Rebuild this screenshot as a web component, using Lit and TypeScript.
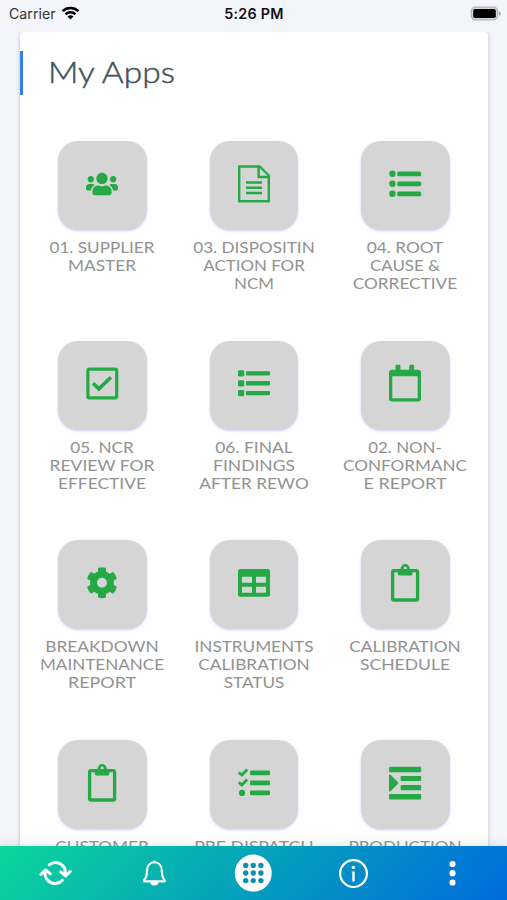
import { LitElement, html, svg, css } from "lit";
import { customElement, property } from "lit/decorators.js";

type Line = [text: string, width: number];
interface AppItem {
  icon: string;
  lines: Line[];
}

const clipboard = svg`
  <rect x="7.6" y="7.6" width="25" height="29.4" rx="1.6" fill="none" stroke="currentColor" stroke-width="3.3"/>
  <path fill-rule="evenodd" d="M12.800 6H15.600a4.600 4.900 0 0 1 9.200 0h2.600v5a1.400 1.400 0 0 1-1.400 1.400H14.200a1.400 1.400 0 0 1-1.400-1.400zM20.200 3.600a1.600 1.600 0 1 0 0.010 0z"/>`;

const ICONS: Record<string, unknown> = {
  users: svg`<g transform="translate(4 7.200) scale(.05)"><path d="M96 224c35.300 0 64-28.700 64-64s-28.700-64-64-64-64 28.700-64 64 28.700 64 64 64zm448 0c35.300 0 64-28.700 64-64s-28.700-64-64-64-64 28.700-64 64 28.700 64 64 64zm32 32h-64c-17.600 0-33.500 7.100-45.100 18.600 40.300 22.100 68.900 62 75.100 109.400h66c17.700 0 32-14.300 32-32v-32c0-35.300-28.700-64-64-64zm-256 0c61.900 0 112-50.100 112-112S381.900 32 320 32 208 82.100 208 144s50.100 112 112 112zm76.800 32h-8.300c-20.800 10-43.900 16-68.500 16s-47.600-6-68.500-16h-8.300C179.600 288 128 339.600 128 403.200V432c0 26.500 21.500 48 48 48h288c26.500 0 48-21.500 48-48v-28.800c0-63.600-51.600-115.200-115.200-115.200zm-223.700-13.400C161.500 263.100 145.600 256 128 256H64c-35.300 0-64 28.700-64 64v32c0 17.700 14.300 32 32 32h65.900c6.300-47.400 34.900-87.300 75.200-109.400z"/></g>`,
  file: svg`<g fill="none" stroke="currentColor" stroke-width="2.400" stroke-linejoin="round">
    <path d="M5.200 2.500H25.800L34.800 11.500V37.300H5.200z"/><path d="M24.600 2.500V13H34.800"/>
    <path d="M12 18.500H28M12 23.800H28M12 29H28"/></g>`,
  listDots: svg`<circle cx="7.400" cy="9.800" r="3.200"/><circle cx="7.400" cy="19.800" r="3.200"/><circle cx="7.400" cy="29.800" r="3.200"/>
    <rect x="12.200" y="7.400" width="24" height="4.800" rx="1.500"/><rect x="12.200" y="17.400" width="24" height="4.800" rx="1.500"/><rect x="12.200" y="27.400" width="24" height="4.800" rx="1.500"/>`,
  checkBox: svg`<rect x="5.900" y="6.100" width="28.800" height="28.800" rx="1.600" fill="none" stroke="currentColor" stroke-width="3.200"/>
    <path d="M11 20.200L16.900 25.900L28.900 14.200" fill="none" stroke="currentColor" stroke-width="3.600"/>`,
  listSquares: svg`<rect x="4" y="7.300" width="6.200" height="6.200" rx="1.200"/><rect x="4" y="17.200" width="6.200" height="6.200" rx="1.200"/><rect x="4" y="27.100" width="6.200" height="6.200" rx="1.200"/>
    <rect x="12" y="8.200" width="24" height="4.300" rx="1"/><rect x="12" y="18.100" width="24" height="4.300" rx="1"/><rect x="12" y="28" width="24" height="4.300" rx="1"/>`,
  calendar: svg`<path fill-rule="evenodd" d="M10.600 2.800a1 1 0 0 1 1-1h2.800a1 1 0 0 1 1 1V6.700h8.900V2.800a1 1 0 0 1 1-1h2.800a1 1 0 0 1 1 1V6.700H33a3 3 0 0 1 3 3V35.500a3 3 0 0 1-3 3H7a3 3 0 0 1-3-3V9.700a3 3 0 0 1 3-3h3.600zM7.300 13.300V34.700a.6.6 0 0 0 .6.6H32.100a.6.6 0 0 0 .6-.6V13.300z"/>`,
  gear: svg`<g transform="translate(4.130 3.930) scale(.062)"><path d="M487.400 315.700l-42.600-24.600c4.300-23.200 4.300-47 0-70.200l42.600-24.600c4.900-2.800 7.100-8.600 5.500-14-11.100-35.600-30-67.800-54.700-94.600-3.800-4.100-10-5.100-14.800-2.300L380.800 110c-17.900-15.400-38.500-27.300-60.800-35.100V25.800c0-5.600-3.900-10.500-9.400-11.700-36.700-8.200-74.300-7.800-109.200 0-5.500 1.200-9.400 6.100-9.400 11.700V75c-22.200 7.900-42.800 19.800-60.800 35.100L88.700 85.500c-4.900-2.800-11-1.900-14.800 2.300-24.700 26.700-43.600 58.900-54.700 94.600-1.700 5.400.6 11.200 5.500 14L67.300 221c-4.300 23.200-4.300 47 0 70.200l-42.600 24.600c-4.900 2.800-7.100 8.600-5.500 14 11.100 35.600 30 67.800 54.700 94.600 3.800 4.100 10 5.100 14.800 2.300l42.600-24.600c17.900 15.400 38.500 27.300 60.800 35.100v49.200c0 5.600 3.900 10.500 9.400 11.700 36.700 8.200 74.300 7.800 109.200 0 5.500-1.200 9.400-6.100 9.400-11.700v-49.200c22.200-7.900 42.800-19.800 60.800-35.100l42.600 24.600c4.900 2.800 11 1.900 14.800-2.300 24.700-26.700 43.600-58.900 54.700-94.600 1.500-5.500-.7-11.300-5.600-14.100zM256 336c-44.100 0-80-35.900-80-80s35.900-80 80-80 80 35.900 80 80-35.900 80-80 80z"/></g>`,
  table: svg`<path fill-rule="evenodd" d="M6.500 6H33.500a2.500 2.500 0 0 1 2.500 2.500V31.200a2.500 2.500 0 0 1-2.500 2.500H6.500a2.500 2.500 0 0 1-2.500-2.500V8.500a2.500 2.500 0 0 1 2.500-2.500zM8 13.800V19.700H18V13.800zM22 13.800V19.700H32V13.800zM8 23.700V29.700H18V23.700zM22 23.700V29.700H32V23.700z"/>`,
  clipboard,
  tasks: svg`<g fill="none" stroke="currentColor" stroke-width="2.900"><path d="M4.800 9.400L7.900 12L13.200 6.500"/><path d="M4.800 19.400L7.900 22L13.200 16.500"/></g>
    <circle cx="8" cy="29.900" r="3.100"/>
    <rect x="16" y="7.600" width="20" height="4.700" rx="1"/><rect x="16" y="17.500" width="20" height="4.700" rx="1"/><rect x="16" y="27.500" width="20" height="4.700" rx="1"/>`,
  indent: svg`<rect x="4" y="3.800" width="32.200" height="5.400" rx="1.100"/><rect x="15.600" y="12.900" width="20.600" height="5.200" rx="1.100"/>
    <rect x="15.600" y="22.100" width="20.600" height="5.200" rx="1.100"/><rect x="4" y="31.100" width="32.200" height="5.400" rx="1.100"/>
    <path d="M4 12.500c0-.9 1-1.300 1.600-.7L13 19.300c.4.400.4 1 0 1.400L5.600 28.300C5 28.900 4 28.500 4 27.600z"/>`,
};

const APPS: AppItem[] = [
  { icon: "users", lines: [["01. SUPPLIER", 105], ["MASTER", 68]] },
  { icon: "file", lines: [["03. DISPOSITIN", 121.5], ["ACTION FOR", 101.5], ["NCM", 40]] },
  { icon: "listDots", lines: [["04. ROOT", 76.5], ["CAUSE &", 70], ["CORRECTIVE", 104.5]] },
  { icon: "checkBox", lines: [["05. NCR", 63.5], ["REVIEW FOR", 105], ["EFFECTIVE", 88]] },
  { icon: "listSquares", lines: [["06. FINAL", 77.5], ["FINDINGS", 82], ["AFTER REWO", 109.5]] },
  { icon: "calendar", lines: [["02. NON-", 73.5], ["CONFORMANC", 124], ["E REPORT", 83]] },
  { icon: "gear", lines: [["BREAKDOWN", 113.5], ["MAINTENANCE", 124], ["REPORT", 68]] },
  { icon: "table", lines: [["INSTRUMENTS", 119], ["CALIBRATION", 111.5], ["STATUS", 60.5]] },
  { icon: "clipboard", lines: [["CALIBRATION", 111.5], ["SCHEDULE", 90]] },
  { icon: "clipboard", lines: [["CUSTOMER", 93.5]] },
  { icon: "tasks", lines: [["PRE DISPATCH", 119.5]] },
  { icon: "indent", lines: [["PRODUCTION", 113]] },
];

@customElement("app-tile")
class AppTile extends LitElement {
  @property({ attribute: false }) item!: AppItem;

  static styles = css`
    :host { display: flex; flex-direction: column; align-items: center; }
    .tile {
      width: 88.5px; height: 89px; border-radius: 20px; background: #d5d5d5;
      box-shadow: 0 1px 2.5px rgba(150, 130, 255, .42);
      display: flex; align-items: center; justify-content: center;
    }
    .icon { width: 40px; height: 40px; margin-bottom: 3.6px; fill: currentColor; color: #24a944; }
    .label { display: block; width: 150px; height: 62px; margin-top: 5px; overflow: visible; }
    .line { font: 400 16px Lato, "Open Sans", sans-serif; fill: #929292; text-anchor: middle; }
  `;

  render() {
    return html`
      <div class="tile"><svg class="icon" viewBox="0 0 40 40">${ICONS[this.item.icon]}</svg></div>
      <svg class="label" viewBox="0 0 150 62">
        ${this.item.lines.map(([text, w], i) => svg`<text class="line" x="75" y=${18 + i * 18.2} textLength=${w} lengthAdjust="spacingAndGlyphs">${text}</text>`)}
      </svg>`;
  }
}

@customElement("app-root")
class AppRoot extends LitElement {
  static styles = css`
    :host {
      display: flex; flex-direction: column; width: 507px; height: 900px; overflow: hidden;
      background: #f3f5fa; font-family: Inter, "Liberation Sans", sans-serif;
    }
    .status {
      height: 32px; flex: none; box-sizing: border-box; padding: 0 6px 5px 9px;
      display: grid; grid-template-columns: 1fr auto 1fr; align-items: center; color: #111;
    }
    .carrier { display: flex; align-items: center; gap: 5.500px; }
    .carrier-name { font-size: 14.2px; color: #333; }
    .wifi { width: 19px; height: 14px; margin-bottom: 1px; }
    .time { font-size: 14.300px; font-weight: 600; letter-spacing: .3px; margin-right: 2px; }
    .battery { justify-self: end; width: 31px; height: 15px; margin-bottom: 1px; }
    .body { flex: 1; min-height: 0; overflow: hidden; padding: 0 19.500px 0 20.400px; }
    .card {
      height: 860px; background: #fff; border-radius: 4px;
      box-shadow: 0 0 4px rgba(60, 70, 80, .28); padding-top: 18.500px; box-sizing: border-box;
    }
    .heading { height: 44.500px; border-left: 3px solid #3480e8; box-sizing: border-box; }
    .title { display: block; width: 200px; height: 44px; overflow: visible; }
    .title-text { font: 300 28.500px Lato, "Open Sans", sans-serif; fill: #40545a; stroke: #40545a; stroke-width: .45px; }
    .grid {
      display: grid; grid-template-columns: repeat(3, 151.500px); grid-auto-rows: 199.800px;
      padding: 45.850px 0 0 6.300px;
    }
    .nav {
      position: relative; flex: none; height: 54px; box-sizing: border-box; padding: 0 5.500px 0 5px;
      display: grid; grid-template-columns: repeat(5, 1fr); align-items: center; justify-items: center;
      background: linear-gradient(135deg, #0ad69a 0%, #006bdd 100%);
      box-shadow: 0 -2px 8px rgba(90, 130, 150, .16); color: #fff;
    }
    .nav-icon { width: 40px; height: 40px; fill: currentColor; }
  `;

  render() {
    return html`
      <div class="status">
        <div class="carrier">
          <span class="carrier-name">Carrier</span>
          <svg class="wifi" viewBox="0 0 19 14">
            <path d="M1.600 5.200a11.600 11.600 0 0 1 15.800 0M4.500 8.200a7.500 7.500 0 0 1 10 0" fill="none" stroke="#000" stroke-width="2.500"/>
            <path d="M6.500 10.500a4.500 4.500 0 0 1 6 0L9.500 13.500z"/>
          </svg>
        </div>
        <span class="time">5:26 PM</span>
        <svg class="battery" viewBox="0 0 31 15">
          <rect x="1.300" y="1.200" width="26.400" height="12.600" rx="4" fill="#d5d6d9" stroke="#b2b3b6" stroke-width="1.300"/>
          <rect x="3.200" y="3" width="22.600" height="9" rx="1.800" fill="#000"/>
          <path d="M29 5.300q1.800.8 1.800 2.200T29 9.700z" fill="#a0a1a4"/>
        </svg>
      </div>
      <div class="body">
        <div class="card">
          <div class="heading">
            <svg class="title" viewBox="0 0 200 44"><text class="title-text" x="24.900" y="31.800" textLength="127" lengthAdjust="spacingAndGlyphs">My Apps</text></svg>
          </div>
          <div class="grid">${APPS.map((item) => html`<app-tile .item=${item}></app-tile>`)}</div>
        </div>
      </div>
      <nav class="nav">
        <svg class="nav-icon" viewBox="0 0 40 40">
          <g fill="none" stroke="currentColor" stroke-width="3" stroke-linecap="round" stroke-linejoin="round">
            <path d="M14.200 11.800A9.900 9.900 0 0 1 30.300 20"/><path d="M25.700 18.900L30.500 22.900L35.200 18.500"/>
            <path d="M27.300 27.200A9.900 9.900 0 0 1 10.300 18.500"/><path d="M5.900 21.400L10.500 16.900L15.300 20.700"/>
          </g>
        </svg>
        <svg class="nav-icon" viewBox="0 0 40 40">
          <path d="M10 27.300c3-3 2.900-5.600 3-9.300.1-5.200 2.900-8.800 7.400-8.800s7.300 3.600 7.400 8.800c.1 3.700 0 6.300 3 9.300.4.600.2 1.100-.5 1.100H10.500c-.7 0-.9-.5-.5-1.100z" fill="none" stroke="currentColor" stroke-width="2.100" stroke-linejoin="round"/>
          <path d="M16.400 29h8a4 3.600 0 0 1-8 0z"/><path d="M19 7.800h2.800v2h-2.800z"/>
        </svg>
        <svg class="nav-icon" viewBox="0 0 40 40">
          <circle cx="20.300" cy="20.100" r="18.500"/>
          ${[12.400, 20, 27.600].map((y) => [12.700, 20.300, 27.900].map((x) => svg`<circle cx=${x} cy=${y} r="2.700" fill="#0f8fb4"/>`))}
        </svg>
        <svg class="nav-icon" viewBox="0 0 40 40">
          <circle cx="20.500" cy="20.600" r="13.400" fill="none" stroke="currentColor" stroke-width="2.200"/>
          <circle cx="20.400" cy="14.500" r="1.700"/><path d="M18.600 18.400h3.100v10h-2.400v-9h-.7z"/>
        </svg>
        <svg class="nav-icon" viewBox="0 0 40 40">
          <circle cx="20.500" cy="11" r="3.100"/><circle cx="20.500" cy="20.200" r="3.100"/><circle cx="20.500" cy="29.500" r="3.100"/>
        </svg>
      </nav>`;
  }
}
